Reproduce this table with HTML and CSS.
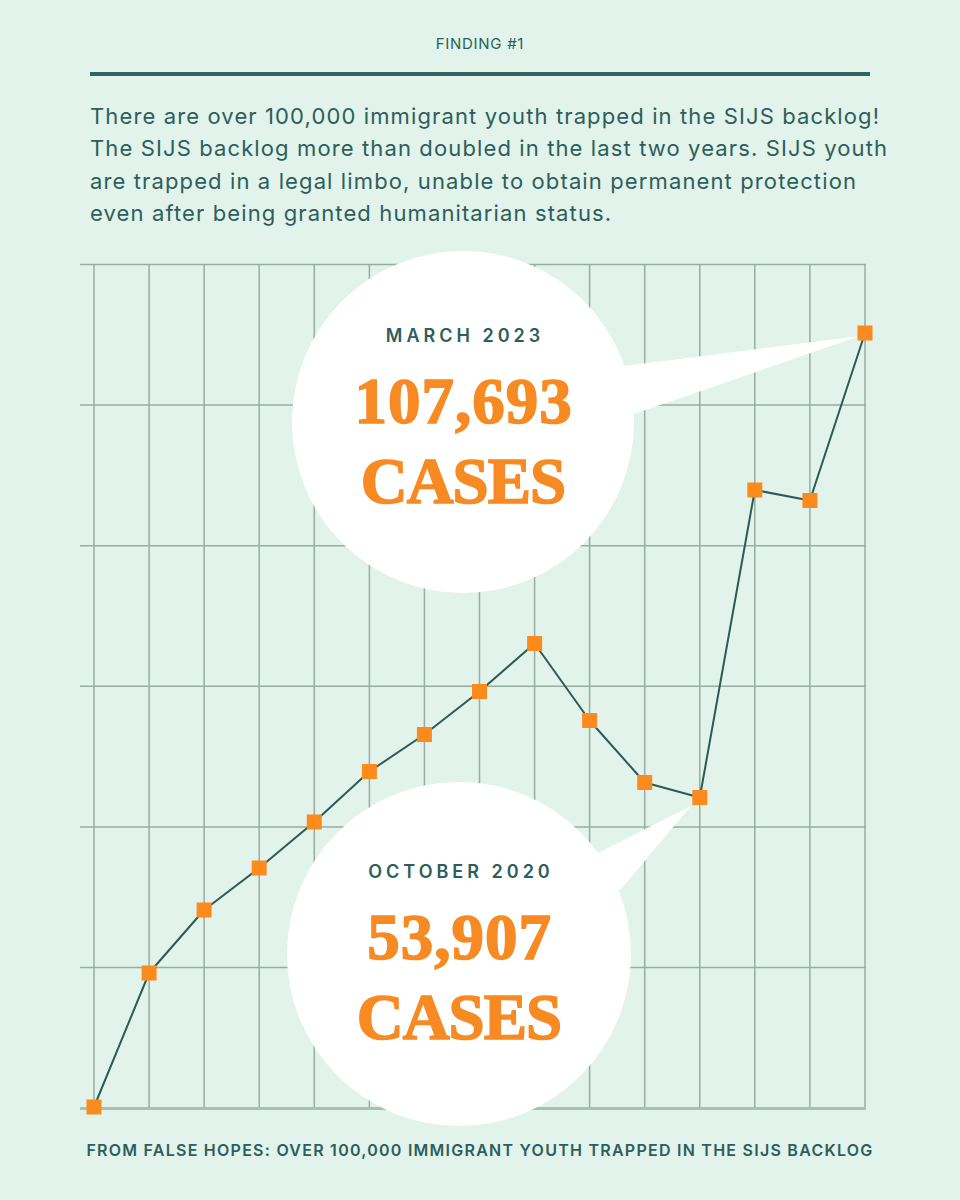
FILE: index.html
```html
<!DOCTYPE html>
<html lang="en">
<head>
<meta charset="utf-8">
<title>Finding #1 – SIJS backlog</title>
<link rel="stylesheet" href="styles.css">
</head>
<body>
<div class="page">
  <header class="intro">
    <p class="kicker">FINDING #1</p>
    <div class="rule"></div>
    <p class="lede">There are over 100,000 immigrant youth trapped in the SIJS backlog!<br>The SIJS backlog more than doubled in the last two years. SIJS youth<br>are trapped in a legal limbo, unable to obtain permanent protection<br>even after being granted humanitarian status.</p>
  </header>

  <section class="chart">
    <svg class="chart-svg" width="960" height="900" viewBox="0 240 960 900" xmlns="http://www.w3.org/2000/svg">
      <g class="grid" stroke="#98ada2" stroke-width="1.5" fill="none">
        <line x1="94" y1="264.5" x2="94" y2="1108"/>
        <line x1="149.1" y1="264.5" x2="149.1" y2="1108"/>
        <line x1="204.1" y1="264.5" x2="204.1" y2="1108"/>
        <line x1="259.2" y1="264.5" x2="259.2" y2="1108"/>
        <line x1="314.3" y1="264.5" x2="314.3" y2="1108"/>
        <line x1="369.4" y1="264.5" x2="369.4" y2="1108"/>
        <line x1="424.4" y1="264.5" x2="424.4" y2="1108"/>
        <line x1="479.5" y1="264.5" x2="479.5" y2="1108"/>
        <line x1="534.6" y1="264.5" x2="534.6" y2="1108"/>
        <line x1="589.6" y1="264.5" x2="589.6" y2="1108"/>
        <line x1="644.7" y1="264.5" x2="644.7" y2="1108"/>
        <line x1="699.8" y1="264.5" x2="699.8" y2="1108"/>
        <line x1="754.8" y1="264.5" x2="754.8" y2="1108"/>
        <line x1="809.9" y1="264.5" x2="809.9" y2="1108"/>
        <line x1="865" y1="264.5" x2="865" y2="1108"/>
        <line x1="80" y1="264.5" x2="865.7" y2="264.5"/>
        <line x1="80" y1="405.1" x2="865.7" y2="405.1"/>
        <line x1="80" y1="545.7" x2="865.7" y2="545.7"/>
        <line x1="80" y1="686.3" x2="865.7" y2="686.3"/>
        <line x1="80" y1="826.9" x2="865.7" y2="826.9"/>
        <line x1="80" y1="967.5" x2="865.7" y2="967.5"/>
      </g>
      <line x1="80" y1="1108.5" x2="866" y2="1108.5" stroke="#a9bfb3" stroke-width="3"/>

      <g class="tails" fill="#ffffff">
        <polygon points="860,336 624,366 463,422 634,414"/>
        <polygon points="691,806 596,854 459,954 621,889"/>
      </g>

      <polyline class="series" fill="none" stroke="#2d5956" stroke-width="2" stroke-linejoin="round"
        points="94,1107 149.1,973 204.1,910 259.2,868 314.3,822 369.4,771.5 424.4,734.5 479.5,691.5 534.6,643.5 589.6,720.5 644.7,782.5 699.8,797.5 754.8,490 809.9,500.5 865,333"/>

      <g class="markers" fill="#fd8a1d">
        <rect x="86.5" y="1099.5" width="15" height="15"/>
        <rect x="141.6" y="965.5" width="15" height="15"/>
        <rect x="196.6" y="902.5" width="15" height="15"/>
        <rect x="251.7" y="860.5" width="15" height="15"/>
        <rect x="306.8" y="814.5" width="15" height="15"/>
        <rect x="361.9" y="764" width="15" height="15"/>
        <rect x="416.9" y="727" width="15" height="15"/>
        <rect x="472" y="684" width="15" height="15"/>
        <rect x="527.1" y="636" width="15" height="15"/>
        <rect x="582.1" y="713" width="15" height="15"/>
        <rect x="637.2" y="775" width="15" height="15"/>
        <rect x="692.3" y="790" width="15" height="15"/>
        <rect x="747.3" y="482.5" width="15" height="15"/>
        <rect x="802.4" y="493" width="15" height="15"/>
        <rect x="857.5" y="325.5" width="15" height="15"/>
      </g>
    </svg>

    <div class="bubble bubble--march">
      <span class="bubble-date">MARCH 2023</span>
      <span class="bubble-num">107,693</span>
      <span class="bubble-num bubble-unit">CASES</span>
    </div>
    <div class="bubble bubble--october">
      <span class="bubble-date">OCTOBER 2020</span>
      <span class="bubble-num">53,907</span>
      <span class="bubble-num bubble-unit">CASES</span>
    </div>
  </section>

  <p class="source">FROM FALSE HOPES: OVER 100,000 IMMIGRANT YOUTH TRAPPED IN THE SIJS BACKLOG</p>
</div>
</body>
</html>
```

FILE: styles.css
```css
* {
  box-sizing: border-box;
}

html, body {
  margin: 0;
  padding: 0;
  background: #e1f3ea;
}

.page {
  width: 960px;
  height: 1200px;
  padding-top: 35px;
  background: #e1f3ea;
  color: #2d5e5b;
  font-family: Inter, "Liberation Sans", sans-serif;
  overflow: hidden;
}

.intro {
  padding: 0 90px;
}

.kicker {
  margin: 0;
  font-size: 15px;
  line-height: 18px;
  text-align: center;
  font-weight: 400;
  letter-spacing: 0.7px;
}

.rule {
  margin-top: 19px;
  height: 4px;
  background: #2f6461;
}

.lede {
  margin: 24px 0 0;
  font-size: 22px;
  line-height: 32.3px;
  letter-spacing: 1.12px;
  white-space: nowrap;
}

.chart {
  position: relative;
  margin-top: 11px;
  width: 960px;
  height: 900px;
}

.chart-svg {
  display: block;
}

.bubble {
  position: absolute;
  border-radius: 50%;
  background: #ffffff;
  display: flex;
  flex-direction: column;
  align-items: center;
}

.bubble--march {
  left: 292px;
  top: 11px;
  width: 342px;
  height: 342px;
  padding-top: 74px;
}

.bubble--october {
  left: 287px;
  top: 542px;
  width: 344px;
  height: 344px;
  padding-top: 79px;
}

.bubble-date {
  font-size: 18px;
  line-height: 22px;
  font-weight: 600;
  letter-spacing: 4px;
  padding-left: 4px;
  color: #2d5e5b;
  margin-bottom: 22px;
}

.bubble-num {
  font-family: "Liberation Serif", "DejaVu Serif", serif;
  font-weight: 700;
  font-size: 65px;
  line-height: 65px;
  color: #f78a22;
  -webkit-text-stroke: 1.6px #f78a22;
  letter-spacing: 1px;
  padding-left: 1px;
}

.bubble-unit {
  margin-top: 15px;
  letter-spacing: -1px;
  padding-left: 0;
}

.source {
  margin: 0;
  font-size: 16px;
  line-height: 20px;
  font-weight: 600;
  letter-spacing: 1.25px;
  text-align: center;
  white-space: nowrap;
}
```
